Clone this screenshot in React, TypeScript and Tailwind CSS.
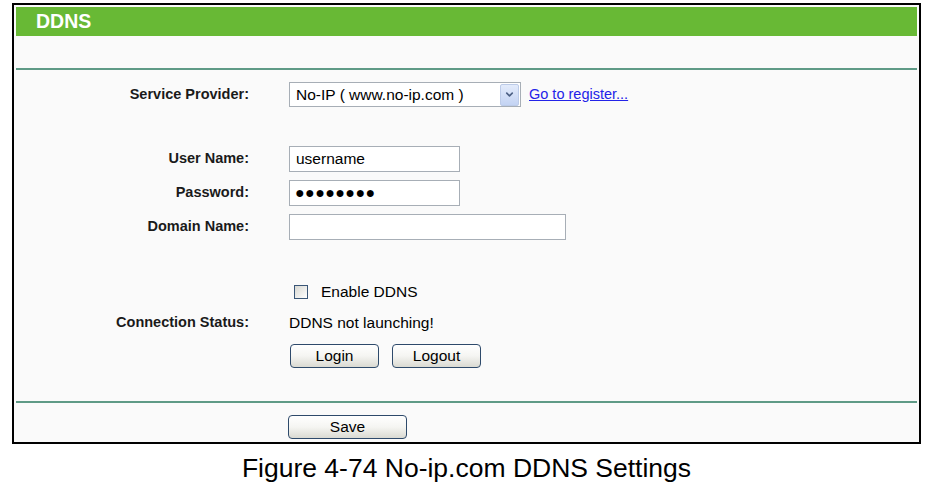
import React from 'react';
import { ChevronDown } from 'lucide-react';

const font = { fontFamily: '"Liberation Sans", Arial, sans-serif' };

const Row: React.FC<{ label?: string; className?: string; children?: React.ReactNode }> = ({
  label,
  className = '',
  children,
}) => (
  <div className={`flex items-center ${className}`}>
    <div className="w-[233px] shrink-0 text-right text-[14.5px] font-bold text-[#1a1a1a]">{label}</div>
    <div className="ml-[40px] flex items-center">{children}</div>
  </div>
);

const XpButton: React.FC<{ width: string; children: React.ReactNode }> = ({ width, children }) => (
  <button
    className={`${width} h-[24px] rounded-[4px] border border-[#2e4a6b] bg-gradient-to-b from-white via-[#f5f5f2] to-[#dadad2] text-[15.5px] leading-none text-black`}
  >
    {children}
  </button>
);

const App: React.FC = () => {
  return (
    <div className="min-h-[491px] w-[940px] bg-white pt-[3px]" style={font}>
      {/* Frame */}
      <div className="ml-[12px] box-border flex h-[441px] w-[909px] flex-col border-2 border-black bg-[#fafafa] p-[2px]">
        <div className="flex h-[29px] items-center bg-[#68b935] pl-[20px] text-[19.5px] font-bold text-white">DDNS</div>
        <div className="mt-[32px] h-[2px] bg-[#5f9a86]" />

        <Row label="Service Provider:" className="mt-[12px] h-[25px]">
          <div className="flex h-[25px] w-[232px] items-center border border-[#a7aeb6] bg-white pl-[6px] pr-[1px]">
            <span className="flex-1 text-[15.5px] text-black">No-IP ( www.no-ip.com )</span>
            <span className="flex h-[22px] w-[19px] items-center justify-center rounded-[2px] border border-[#bccbe8] bg-gradient-to-b from-[#e3ebfb] to-[#c3d3f3]">
              <ChevronDown size={11} strokeWidth={3.5} color="#4d6185" />
            </span>
          </div>
          <a className="ml-[8px] text-[14.5px] text-[#2323e8] underline" href="#">
            Go to register...
          </a>
        </Row>

        <Row label="User Name:" className="mt-[39px] h-[26px]">
          <input
            readOnly
            value="username"
            className="h-[26px] w-[171px] border border-[#a7aeb6] bg-white pl-[6px] text-[15.5px] text-black outline-none"
            style={font}
          />
        </Row>
        <Row label="Password:" className="mt-[8px] h-[26px]">
          <input
            readOnly
            value="●●●●●●●●"
            className="h-[26px] w-[171px] border border-[#a7aeb6] bg-white pl-[5px] text-[16px] tracking-[0.4px] text-black outline-none"
            style={font}
          />
        </Row>
        <Row label="Domain Name:" className="mt-[8px] h-[26px]">
          <input
            readOnly
            value=""
            className="h-[26px] w-[277px] border border-[#a7aeb6] bg-white pl-[6px] text-[15.5px] text-black outline-none"
            style={font}
          />
        </Row>

        <Row className="mt-[42px] h-[20px]">
          <span className="ml-[5px] h-[14px] w-[14px] border border-[#3a5677] bg-gradient-to-br from-[#d8d8d2] to-white" />
          <span className="ml-[13px] text-[15.5px] text-black">Enable DDNS</span>
        </Row>
        <Row label="Connection Status:" className="mt-[10px] h-[21px]">
          <span className="text-[15.5px] text-black">DDNS not launching!</span>
        </Row>
        <Row className="mt-[11px] h-[24px]">
          <span className="ml-[1px] flex gap-[13px]">
            <XpButton width="w-[89px]">Login</XpButton>
            <XpButton width="w-[89px]">Logout</XpButton>
          </span>
        </Row>

        <div className="mt-[33px] h-[2px] bg-[#5f9a86]" />
        <Row className="mt-[12px] h-[24px]">
          <span className="-ml-[1px]">
            <XpButton width="w-[119px]">Save</XpButton>
          </span>
        </Row>
      </div>

      <div className="ml-[12px] mt-[9px] w-[909px] text-center text-[26.5px] leading-[30px] text-black">
        Figure 4-74 No-ip.com DDNS Settings
      </div>
    </div>
  );
};

export default App;
